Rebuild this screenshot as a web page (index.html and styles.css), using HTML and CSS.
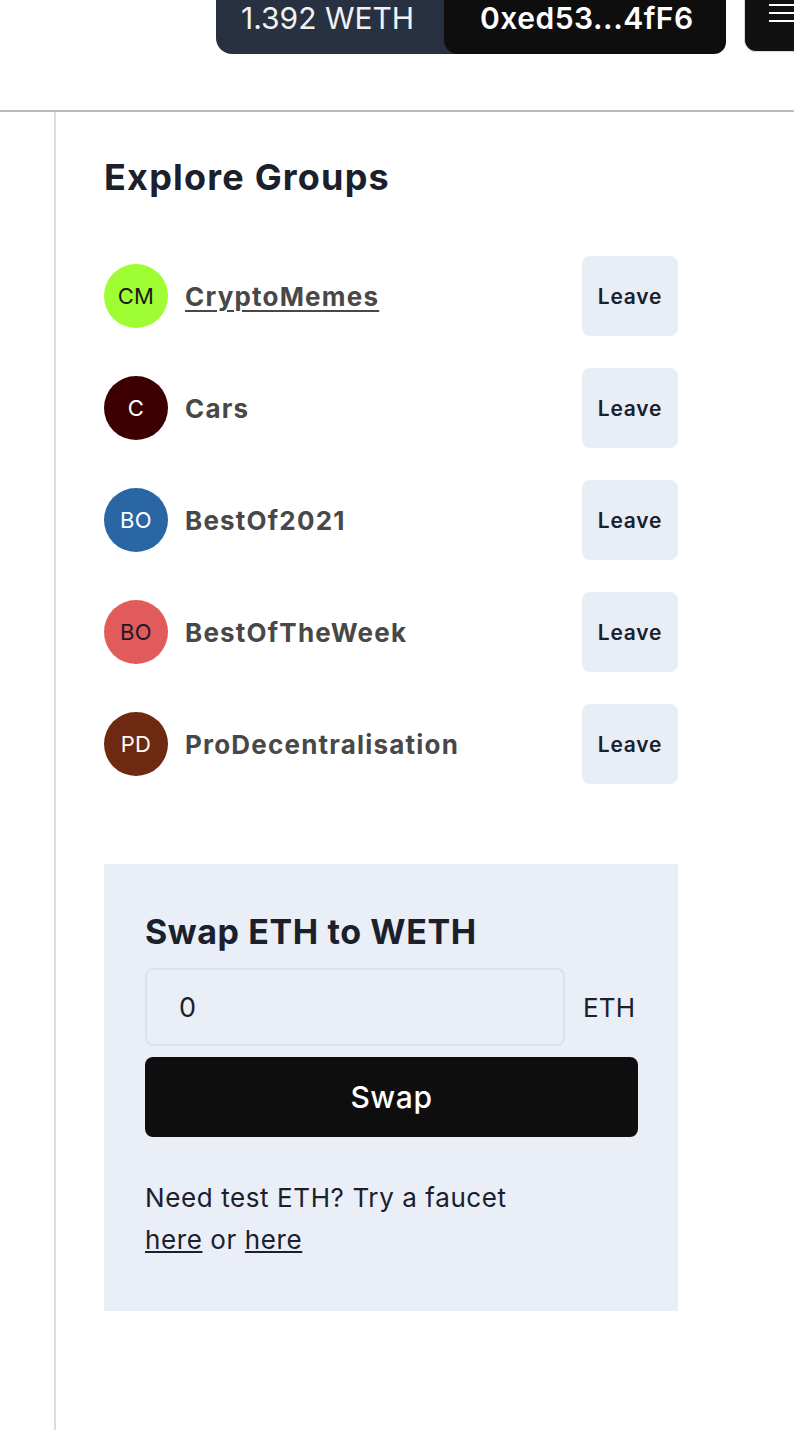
FILE: index.html
```html
<!DOCTYPE html>
<html>
<head>
<meta charset="utf-8">
<link rel="stylesheet" href="styles.css">
</head>
<body>
<header class="topbar">
  <div class="wallet">
    <span class="balance">1.392 WETH</span>
    <span class="address">0xed53...4fF6</span>
  </div>
  <button class="menu" aria-label="menu">
    <span class="bar"></span><span class="bar"></span><span class="bar"></span>
  </button>
</header>
<div class="layout">
  <aside class="sidebar"></aside>
  <main class="content">
    <h1 class="title">Explore Groups</h1>
    <ul class="groups">
      <li class="group">
        <span class="avatar av-lime">CM</span>
        <a class="name linked" href="#">CryptoMemes</a>
        <button class="leave">Leave</button>
      </li>
      <li class="group">
        <span class="avatar av-maroon">C</span>
        <span class="name">Cars</span>
        <button class="leave">Leave</button>
      </li>
      <li class="group">
        <span class="avatar av-blue">BO</span>
        <span class="name">BestOf2021</span>
        <button class="leave">Leave</button>
      </li>
      <li class="group">
        <span class="avatar av-coral">BO</span>
        <span class="name">BestOfTheWeek</span>
        <button class="leave">Leave</button>
      </li>
      <li class="group">
        <span class="avatar av-brown">PD</span>
        <span class="name">ProDecentralisation</span>
        <button class="leave">Leave</button>
      </li>
    </ul>
    <section class="swap">
      <h2 class="swap-title">Swap ETH to WETH</h2>
      <div class="swap-row">
        <input class="amount" type="text" value="0">
        <span class="unit">ETH</span>
      </div>
      <button class="swap-btn">Swap</button>
      <p class="faucet">Need test ETH? Try a faucet<br><a href="#">here</a> or <a href="#">here</a></p>
    </section>
  </main>
</div>
</body>
</html>
```
FILE: styles.css
```css
* { box-sizing: border-box; }
html, body { margin: 0; padding: 0; }
body {
  font-family: Inter, "Noto Sans", sans-serif;
  background: #ffffff;
  color: #1a202c;
  overflow-x: hidden;
  width: 794px;
}
.topbar {
  height: 112px;
  border-bottom: 2px solid #bbbbbb;
  display: flex;
  align-items: flex-start;
  padding-left: 216px;
  gap: 18px;
  overflow: hidden;
}
.wallet {
  display: flex;
  height: 54px;
  background: #283141;
  border-radius: 0 0 16px 16px;
  flex-shrink: 0;
}
.balance {
  width: 228px;
  padding: 0 0 0 25px;
  font-size: 30px;
  line-height: 37px;
  color: #f2f2f2;
  white-space: nowrap;
}
.address {
  width: 282px;
  background: #0e0e0e;
  border-radius: 0 0 12px 14px;
  padding: 0 0 0 36px;
  font-size: 30px;
  line-height: 37px;
  font-weight: 600;
  letter-spacing: 0.5px;
  color: #ffffff;
  white-space: nowrap;
}
.menu {
  flex-shrink: 0;
  width: 90px;
  height: 52px;
  background: #111111;
  border: 1px solid #d8dde4;
  border-top: none;
  border-radius: 0 0 0 12px;
  padding: 4px 0 0 24px;
  display: flex;
  flex-direction: column;
  gap: 6px;
}
.bar {
  display: block;
  width: 40px;
  height: 2px;
  background: #ffffff;
}
.layout {
  display: flex;
  min-height: 1318px;
}
.sidebar {
  width: 56px;
  border-right: 2px solid #dddddd;
  flex-shrink: 0;
}
.content {
  margin-left: 48px;
  width: 574px;
  padding-top: 44px;
}
.title {
  margin: 0;
  font-size: 36px;
  font-weight: 700;
  letter-spacing: 1.2px;
  line-height: 42px;
  color: #1a202c;
}
.groups {
  list-style: none;
  margin: 58px 0 0;
  padding: 0;
  display: flex;
  flex-direction: column;
  gap: 32px;
}
.group {
  display: flex;
  align-items: center;
  height: 80px;
}
.avatar {
  width: 64px;
  height: 64px;
  border-radius: 50%;
  display: flex;
  align-items: center;
  justify-content: center;
  font-size: 22px;
  letter-spacing: 0.3px;
  flex-shrink: 0;
}
.av-lime { background: #9efe33; color: #1a1a1a; }
.av-maroon { background: #3d0000; color: #ffffff; }
.av-blue { background: #2966a3; color: #ffffff; }
.av-coral { background: #e05b59; color: #1a1a2a; }
.av-brown { background: #6e2a10; color: #ffffff; }
.name {
  margin-left: 17px;
  font-size: 26px;
  font-weight: 700;
  letter-spacing: 1.2px;
  color: #484848;
  flex: 1;
}
.name.linked { flex: 0 0 auto; margin-right: auto; text-decoration: underline; text-underline-offset: 4px; text-decoration-thickness: 2px; }
.leave {
  width: 96px;
  height: 80px;
  border: none;
  border-radius: 8px;
  background: #e9eef6;
  font-family: Inter, "Noto Sans", sans-serif;
  font-size: 21px;
  font-weight: 600;
  letter-spacing: 0.8px;
  color: #1a202c;
  padding: 0;
}
.swap {
  margin-top: 80px;
  background: #eaeef6;
  padding: 46px 40px 50px 41px;
}
.swap-title {
  margin: 0;
  font-size: 34px;
  font-weight: 700;
  letter-spacing: 0.6px;
  line-height: 44px;
  color: #1a202c;
}
.swap-row {
  display: flex;
  align-items: center;
  gap: 18px;
  margin-top: 14px;
}
.amount {
  width: 420px;
  height: 78px;
  border: 2px solid #dde2ea;
  border-radius: 8px;
  background: #eaeef6;
  font-family: Inter, "Noto Sans", sans-serif;
  font-size: 27px;
  padding: 0 32px;
  color: #1a202c;
}
.unit {
  font-size: 26px;
  letter-spacing: 0.2px;
  color: #1a202c;
}
.swap-btn {
  margin-top: 11px;
  width: 493px;
  height: 80px;
  border: none;
  border-radius: 8px;
  background: #0e0e0e;
  color: #ffffff;
  font-family: Inter, "Noto Sans", sans-serif;
  font-size: 30px;
  font-weight: 500;
  letter-spacing: 0.6px;
  display: block;
}
.faucet {
  margin: 40px 0 0;
  font-size: 26px;
  letter-spacing: 0.6px;
  line-height: 42px;
  color: #1a202c;
}
.faucet a { color: #1a202c; text-decoration: underline; }
```
